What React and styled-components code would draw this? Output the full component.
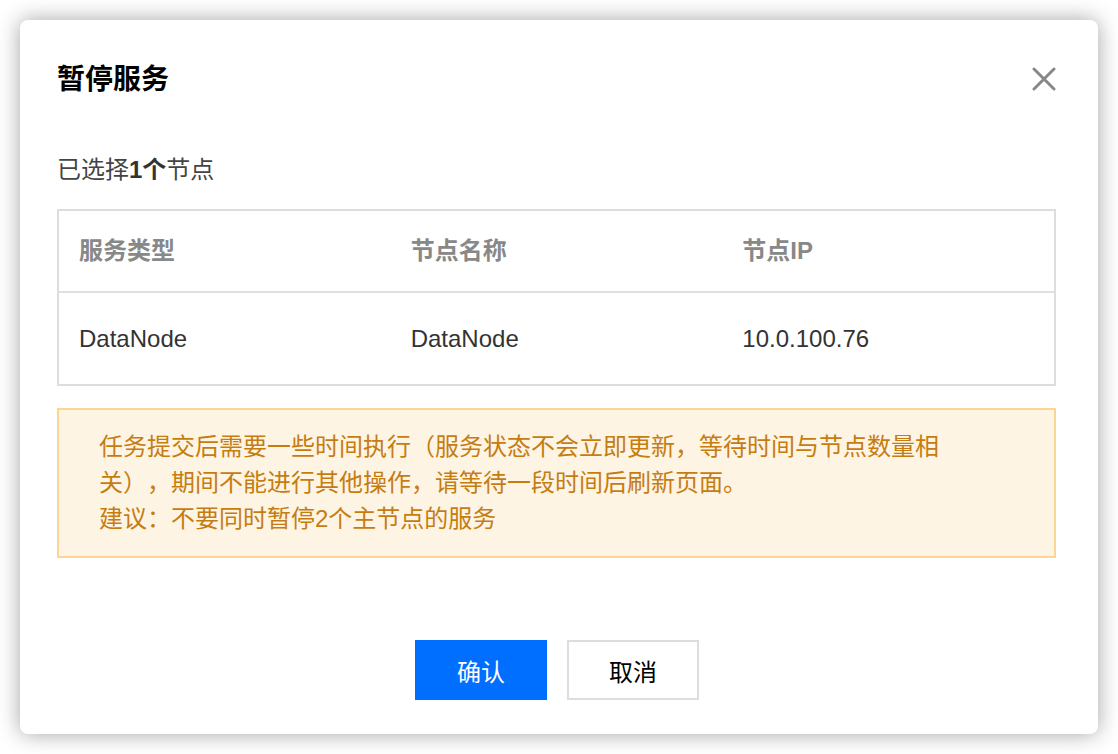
import React from "react";
import styled, { createGlobalStyle } from "styled-components";

const Global = createGlobalStyle`
  html, body { margin: 0; padding: 0; background: #ffffff; }
  body { font-family: "Liberation Sans", "Noto Sans CJK SC", sans-serif; text-spacing-trim: space-all; }
  * { box-sizing: border-box; }
`;

const Page = styled.div`
  width: 1118px;
  height: 754px;
  padding: 20px;
`;

const Dialog = styled.div`
  width: 1078px;
  height: 714px;
  background: #fff;
  border-radius: 8px;
  box-shadow: 0 0 22px rgba(0, 0, 0, 0.36);
  padding: 40px 42px 34px 37px;
  display: flex;
  flex-direction: column;
`;

const Header = styled.div`
  display: flex;
  align-items: center;
  justify-content: space-between;
  height: 40px;
`;

const Title = styled.h2`
  margin: 0;
  font-size: 28px;
  line-height: 40px;
  font-weight: 700;
  color: #000;
`;

const CloseButton = styled.button`
  border: none;
  background: none;
  padding: 0;
  width: 26px;
  height: 26px;
  margin-right: -1px;
  margin-top: -2px;
  display: flex;
  align-items: center;
  justify-content: center;
  cursor: pointer;
`;

const Summary = styled.div`
  margin-top: 52px;
  font-size: 24px;
  line-height: 36px;
  color: #444;
`;

const Strong = styled.b`
  font-weight: 700;
  color: #333;
`;

const Table = styled.div`
  margin-top: 21px;
  border: 2px solid #dddddd;
  display: flex;
  flex-direction: column;
`;

const Row = styled.div`
  display: grid;
  grid-template-columns: 1fr 1fr 1fr;
  height: ${(p) => (p.$head ? "80px" : "93px")};
  border-top: ${(p) => (p.$head ? "none" : "2px solid #e0e0e0")};
  align-items: center;
`;

const Cell = styled.div`
  padding-left: 20px;
  font-size: 24px;
  line-height: 36px;
  color: ${(p) => (p.$head ? "#888" : "#333")};
  font-weight: ${(p) => (p.$head ? 700 : 400)};
`;

const Notice = styled.div`
  margin-top: 22px;
  background: #fef4e3;
  border: 2px solid #fcd594;
  padding: 19px 40px 19px 40px;
`;

const NoticeText = styled.p`
  margin: 0;
  max-width: 850px;
  font-size: 24px;
  line-height: 36px;
  color: #c57d12;
`;

const Footer = styled.div`
  margin-top: auto;
  display: flex;
  justify-content: center;
  gap: 20px;
  padding-left: 1px;
`;

const Button = styled.button`
  width: 132px;
  height: 60px;
  font-family: "Liberation Sans", "Noto Sans CJK SC", sans-serif;
  font-size: 24px;
  border: 2px solid ${(p) => (p.$primary ? "#006eff" : "#dddddd")};
  background: ${(p) => (p.$primary ? "#006eff" : "#ffffff")};
  color: ${(p) => (p.$primary ? "#ffffff" : "#000000")};
  cursor: pointer;
  padding: 0;
`;

export default function App() {
  return (
    <>
      <Global />
      <Page>
        <Dialog>
          <Header>
            <Title>暂停服务</Title>
            <CloseButton aria-label="关闭">
              <svg width="24" height="24" viewBox="0 0 24 24">
                <path
                  d="M2 2 L22 22 M22 2 L2 22"
                  stroke="#888"
                  strokeWidth="3"
                  strokeLinecap="round"
                />
              </svg>
            </CloseButton>
          </Header>
          <Summary>
            已选择<Strong>1个</Strong>节点
          </Summary>
          <Table>
            <Row $head>
              <Cell $head>服务类型</Cell>
              <Cell $head>节点名称</Cell>
              <Cell $head>节点IP</Cell>
            </Row>
            <Row>
              <Cell>DataNode</Cell>
              <Cell>DataNode</Cell>
              <Cell>10.0.100.76</Cell>
            </Row>
          </Table>
          <Notice>
            <NoticeText>
              任务提交后需要一些时间执行（服务状态不会立即更新，等待时间与节点数量相关），期间不能进行其他操作，请等待一段时间后刷新页面。
            </NoticeText>
            <NoticeText>建议：不要同时暂停2个主节点的服务</NoticeText>
          </Notice>
          <Footer>
            <Button $primary>确认</Button>
            <Button>取消</Button>
          </Footer>
        </Dialog>
      </Page>
    </>
  );
}
